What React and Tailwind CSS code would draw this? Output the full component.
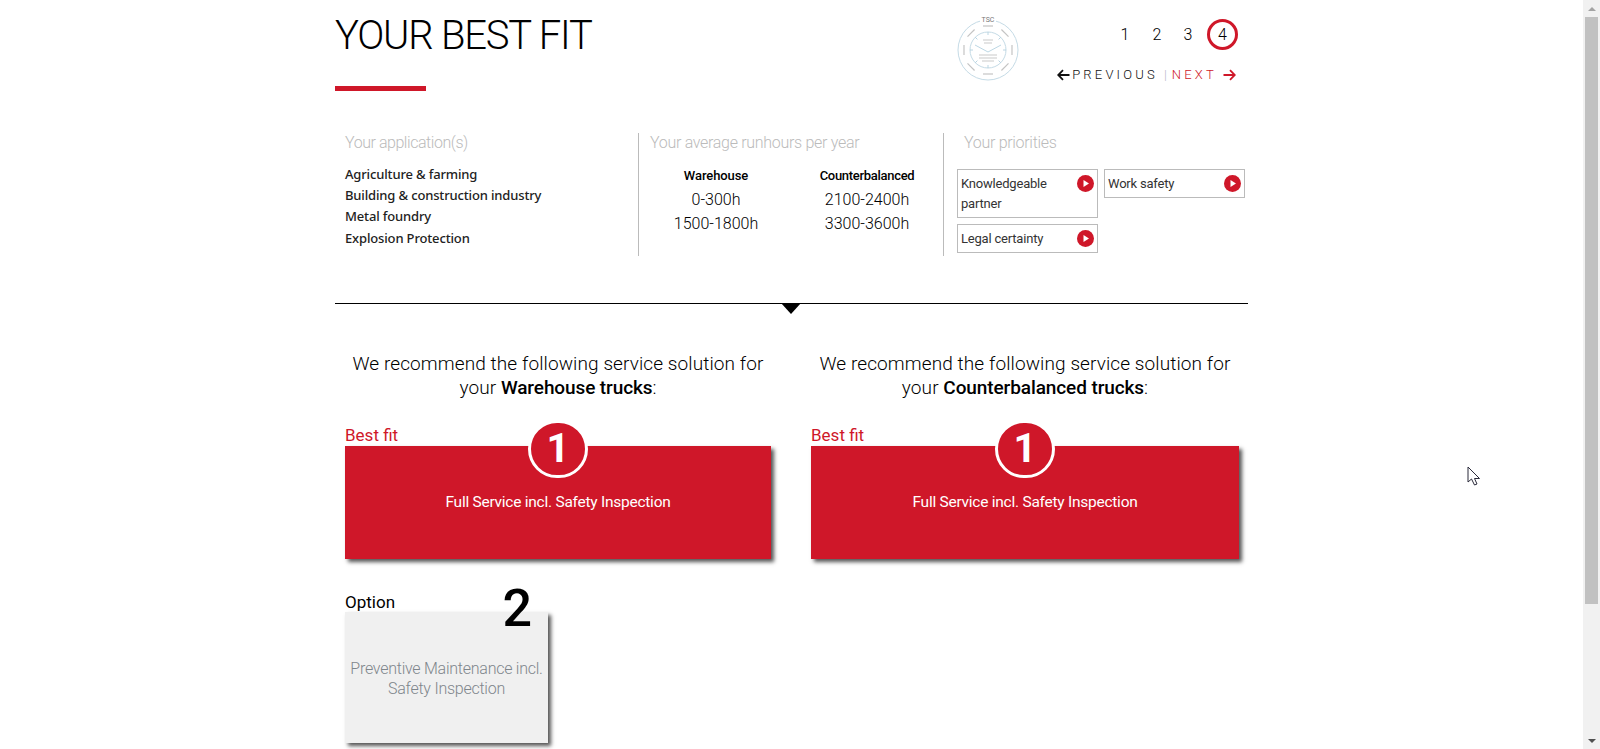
import React from "react";

const F = "font-['Roboto',sans-serif]";

function Play() {
  return (
    <svg width="17" height="17" viewBox="0 0 17 17" className="shrink-0">
      <circle cx="8.5" cy="8.5" r="8.5" fill="#cf1729" />
      <path d="M6.5 5 L12 8.5 L6.5 12 Z" fill="#fff" />
    </svg>
  );
}

function Chip({ children, tall }) {
  return (
    <div className={`w-[141px] border border-[#bbbbbb] pl-[3px] pr-[3px] flex justify-between items-start ${tall ? "h-[49px]" : "h-[29px]"}`}>
      <span className="text-[13px] leading-[20px] text-[#333] pt-[4px] tracking-[-0.2px]">{children}</span>
      <span className="pt-[5px]"><Play /></span>
    </div>
  );
}

function Logo() {
  const ticks = [0, 45, 90, 135, 180, 225, 270, 315];
  return (
    <svg width="64" height="68" viewBox="0 0 64 68" className="block">
      <circle cx="32" cy="36" r="30" fill="none" stroke="#c5dbe6" strokeWidth="1" />
      <circle cx="32" cy="36" r="18" fill="none" stroke="#c5dbe6" strokeWidth="1" />
      <rect x="24" y="0" width="16" height="10" fill="#fff" />
      <text x="32" y="8" textAnchor="middle" fontSize="7" fill="#777" fontFamily="Roboto, sans-serif">TSC</text>
      <path d="M19 31 L32 38 L45 31" fill="none" stroke="#a9cbdc" strokeWidth="0.8" />
      {ticks.map((t) => (
        <g key={t} transform={`rotate(${t} 32 36)`}>
          <line x1="27" x2="37" y1="12" y2="12" stroke="#c4c4c4" strokeWidth="1.2" />
          <line x1="32" x2="32" y1="18" y2="21" stroke="#a9cbdc" strokeWidth="0.8" />
        </g>
      ))}
      <line x1="27" x2="37" y1="26" y2="26" stroke="#c9c9c9" strokeWidth="1" />
      <line x1="28" x2="36" y1="29" y2="29" stroke="#c9c9c9" strokeWidth="1" />
      <line x1="23" x2="41" y1="41" y2="41" stroke="#c9c9c9" strokeWidth="1" />
      <line x1="23" x2="41" y1="44" y2="44" stroke="#c9c9c9" strokeWidth="1" />
      <line x1="26" x2="38" y1="47" y2="47" stroke="#c9c9c9" strokeWidth="1" />
    </svg>
  );
}

function Arrow({ left, color }) {
  return (
    <svg width="13" height="12" viewBox="0 0 13 12" className={left ? "" : "rotate-180"}>
      <path d="M12.5 6 H1.5 M6 1.2 L1.2 6 L6 10.8" fill="none" stroke={color} strokeWidth="1.8" />
    </svg>
  );
}

function Solution({ truck, wide }) {
  return (
    <div className={wide ? "w-[428px]" : "w-[426px]"}>
      <div className="h-[48px] text-center text-[19px] leading-[24px] text-black font-light tracking-[0.1px]">
        We recommend the following service solution for<br />
        your <b className="font-medium tracking-[-0.1px]">{truck} trucks</b>:
      </div>
      <div className="mt-[24px] h-[22px] text-[17px] leading-[22px] text-[#cf1729]">Best fit</div>
      <div className="relative h-[113px] bg-[#cf1729] shadow-[3px_3px_4px_#555] flex items-center justify-center">
        <div className={`absolute top-[-26px] w-[60px] h-[58px] rounded-full bg-[#cf1729] border-[3px] border-white flex items-center justify-center text-white text-[40px] font-bold leading-none ${wide ? "left-[184px]" : "left-[183px]"}`}>1</div>
        <span className="text-white text-[15.5px] tracking-[-0.25px] pt-[1px]">Full Service incl. Safety Inspection</span>
      </div>
    </div>
  );
}

export default function App() {
  return (
    <div className={`relative flex h-screen overflow-hidden bg-white ${F}`}>
      <main className="flex-1 min-w-0 overflow-hidden">
        <div className="w-[913px] ml-[335px]">
          <header className="flex justify-between h-[133px]">
            <div>
              <h1 className="text-[40px] leading-[48px] mt-[12px] font-light text-black tracking-[-1.2px]">YOUR BEST FIT</h1>
              <div className="w-[91px] h-[5px] bg-[#cf1729] mt-[26px]" />
            </div>
            <div className="flex pr-[10px]">
              <div className="mt-[14px] mr-[37px]"><Logo /></div>
              <div className="flex flex-col items-end mt-[19px]">
                <div className="flex items-center text-[16px] font-light text-black">
                  <span className="w-[32px] text-center">1</span>
                  <span className="w-[32px] text-center">2</span>
                  <span className="w-[30px] text-center">3</span>
                  <span className="ml-[4px] w-[31px] h-[31px] rounded-full border-[3px] border-[#cf1729] flex items-center justify-center">4</span>
                </div>
                <div className="mt-[17px] flex items-center text-[13px] leading-[16px] font-light pr-[2px]">
                  <Arrow left color="#111" />
                  <span className="ml-[2px] tracking-[3.2px] text-[#111]">PREVIOUS</span>
                  <span className="ml-[6px] text-[#b8b8c8]">|</span>
                  <span className="ml-[5px] tracking-[3.2px] text-[#cf1729]">NEXT</span>
                  <span className="ml-[6px]"><Arrow color="#cf1729" /></span>
                </div>
              </div>
            </div>
          </header>

          <section className="flex h-[123px]">
            <div className="w-[303px] pl-[10px]">
              <div className="text-[16px] leading-[20px] font-light text-[#bbb] tracking-[-0.45px]">Your application(s)</div>
              <ul className="mt-[11px] font-['Noto_Sans',sans-serif] font-medium text-[13px] leading-[21.2px] text-[#222] tracking-[-0.15px]">
                <li>Agriculture &amp; farming</li>
                <li>Building &amp; construction industry</li>
                <li>Metal foundry</li>
                <li>Explosion Protection</li>
              </ul>
            </div>
            <div className="w-[305px] border-l border-[#bbb] pl-[11px]">
              <div className="text-[16px] leading-[20px] font-light text-[#bbb] tracking-[-0.3px]">Your average runhours per year</div>
              <div className="mt-[13px] flex text-center">
                <div className="w-[132px]">
                  <div className="text-[13px] font-medium leading-[20px] text-black tracking-[-0.1px]">Warehouse</div>
                  <div className="mt-[2px] text-[16px] leading-[23.5px] font-light text-black">0-300h<br />1500-1800h</div>
                </div>
                <div className="w-[140px] ml-[15px]">
                  <div className="text-[13px] font-medium leading-[20px] text-black tracking-[-0.3px]">Counterbalanced</div>
                  <div className="mt-[2px] text-[16px] leading-[23.5px] font-light text-black">2100-2400h<br />3300-3600h</div>
                </div>
              </div>
            </div>
            <div className="flex-1 border-l border-[#bbb] pl-[13px]">
              <div className="pl-[7px] text-[16px] leading-[20px] font-light text-[#bbb] tracking-[-0.3px]">Your priorities</div>
              <div className="mt-[16px] flex gap-[6px] items-start">
                <div className="flex flex-col gap-[6px]">
                  <Chip tall>Knowledgeable<br />partner</Chip>
                  <Chip>Legal certainty</Chip>
                </div>
                <Chip>Work safety</Chip>
              </div>
            </div>
          </section>

          <div className="relative mt-[47px] h-px bg-black">
            <div className="absolute left-[446px] top-0 w-0 h-0 border-l-[10px] border-r-[10px] border-t-[11px] border-l-transparent border-r-transparent border-t-black" />
          </div>

          <section className="mt-[48px] ml-[10px] flex gap-[40px]">
            <Solution truck="Warehouse" />
            <Solution truck="Counterbalanced" wide />
          </section>

          <section className="ml-[10px] mt-[30px]">
            <div className="relative w-[203px]">
              <div className="h-[23px] text-[17px] leading-[26px] text-black">Option</div>
              <div className="absolute right-[16px] top-[-10px] text-[52px] leading-[60px] font-medium text-black">2</div>
              <div className="h-[131px] bg-[#f0f0f0] shadow-[3px_3px_4px_#555] flex items-center justify-center text-center text-[16px] leading-[20px] font-light text-[#7f868c] tracking-[-0.25px] pt-[2px]">
                <span>Preventive Maintenance incl.<br />Safety Inspection</span>
              </div>
            </div>
          </section>
        </div>
      </main>

      <aside className="w-[17px] shrink-0 h-full bg-[#f1f1f1] flex flex-col items-center">
        <div className="h-[17px] flex items-center justify-center">
          <div className="w-0 h-0 border-l-[4px] border-r-[4px] border-b-[4px] border-l-transparent border-r-transparent border-b-[#a3a3a3]" />
        </div>
        <div className="w-[13px] h-[587px] bg-[#c1c1c1]" />
        <div className="mt-auto h-[17px] flex items-center justify-center">
          <div className="w-0 h-0 border-l-[4px] border-r-[4px] border-t-[4px] border-l-transparent border-r-transparent border-t-[#505050]" />
        </div>
      </aside>

      <svg width="14" height="21" viewBox="0 0 14 21" className="absolute left-[1467px] top-[466px]">
        <path d="M1 1 V16 L4.5 13 L7.5 19 L10 18 L7.5 12.5 L12.5 12.5 Z" fill="#fff" stroke="#2a2a3a" strokeWidth="1" />
      </svg>
    </div>
  );
}
